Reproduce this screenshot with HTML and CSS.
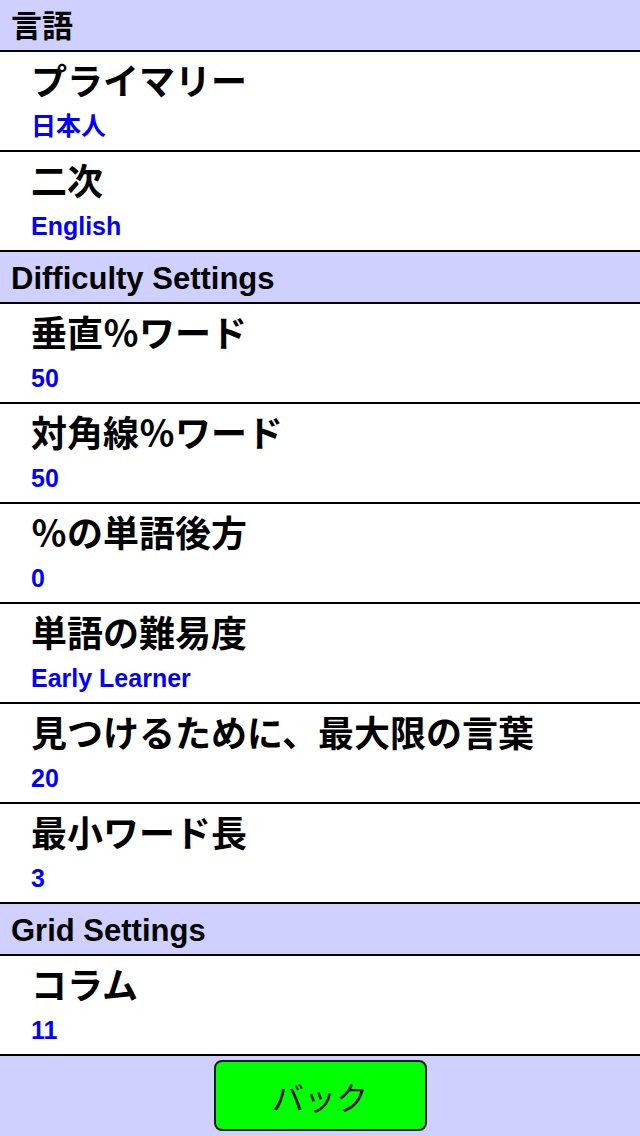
FILE: index.html
```html
<!DOCTYPE html>
<html lang="ja">
<head>
  <meta charset="UTF-8" />
  <meta name="viewport" content="width=device-width, initial-scale=1.0" />
  <title>Settings</title>
  <link rel="stylesheet" href="styles.css">
</head>
<body>
  <div class="settings">
    <div class="section">言語</div>
    <div class="item">
      <div class="title">プライマリー</div>
      <div class="value">日本人</div>
    </div>
    <div class="item">
      <div class="title">二次</div>
      <div class="value">English</div>
    </div>

    <div class="section">Difficulty Settings</div>
    <div class="item">
      <div class="title">垂直％ワード</div>
      <div class="value">50</div>
    </div>
    <div class="item">
      <div class="title">対角線％ワード</div>
      <div class="value">50</div>
    </div>
    <div class="item">
      <div class="title">％の単語後方</div>
      <div class="value">0</div>
    </div>
    <div class="item">
      <div class="title">単語の難易度</div>
      <div class="value">Early Learner</div>
    </div>
    <div class="item">
      <div class="title">見つけるために、最大限の言葉</div>
      <div class="value">20</div>
    </div>
    <div class="item">
      <div class="title">最小ワード長</div>
      <div class="value">3</div>
    </div>

    <div class="section">Grid Settings</div>
    <div class="item">
      <div class="title">コラム</div>
      <div class="value">11</div>
    </div>
  </div>

  <div class="footer">
    <button class="back">バック</button>
  </div>
</body>
</html>
```

FILE: styles.css
```css
body {
  margin: 0;
  padding: 0;
  font-family: "Liberation Sans", "Noto Sans CJK JP", sans-serif;
  background-color: #ffffff;
  color: #000000;
  height: 1136px;
  display: flex;
  flex-direction: column;
  overflow: hidden;
}
.settings {
  flex: 1;
}
.section {
  background-color: #d0d0ff;
  border-bottom: 2px solid #000;
  padding: 3px 0 0 11px;
  height: 47px;
  line-height: 47px;
  font-size: 31px;
  font-weight: bold;
}
.item {
  border-bottom: 2px solid #000;
  padding: 5px 0 9px 31px;
}
.title {
  font-family: "Noto Sans CJK JP", sans-serif;
  font-size: 36px;
  line-height: 44px;
  font-weight: bold;
}
.value {
  margin-top: 10px;
  font-size: 25px;
  line-height: 30px;
  font-weight: bold;
  color: #0000ff;
}
.footer {
  height: 80px;
  background-color: #d0d0ff;
  display: flex;
  justify-content: center;
  padding-top: 4px;
  box-sizing: border-box;
}
.back {
  width: 213px;
  height: 71px;
  background-color: #00ff00;
  border: 2px solid #1a1a1a;
  border-radius: 8px;
  font-family: "Noto Sans CJK JP", sans-serif;
  font-size: 32px;
  color: #111;
  padding: 0;
  cursor: pointer;
}
```
